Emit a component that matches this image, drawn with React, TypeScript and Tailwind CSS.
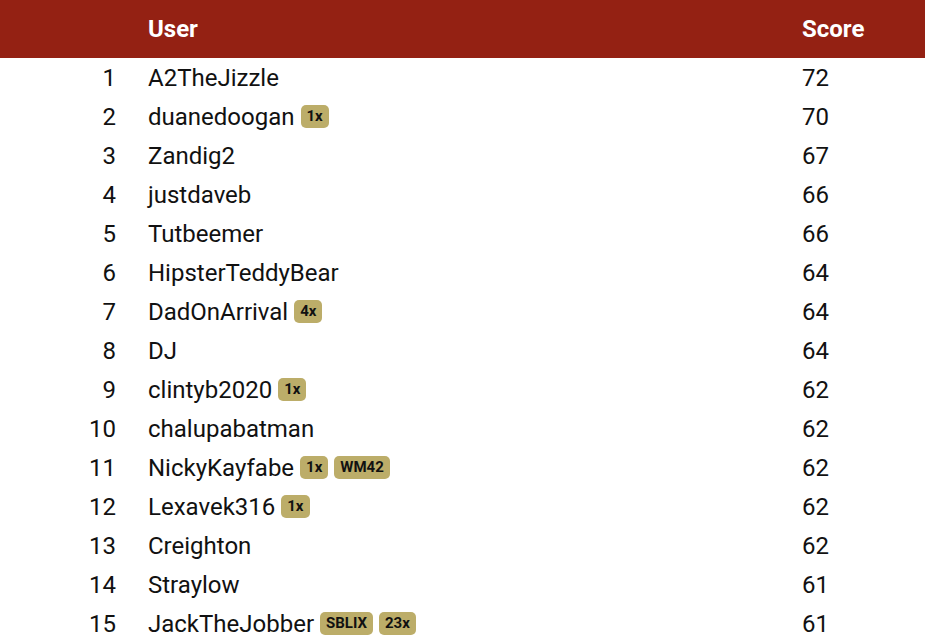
const rows: { rank: number; user: string; badges: string[]; score: number }[] = [
  { rank: 1, user: 'A2TheJizzle', badges: [], score: 72 },
  { rank: 2, user: 'duanedoogan', badges: ['1x'], score: 70 },
  { rank: 3, user: 'Zandig2', badges: [], score: 67 },
  { rank: 4, user: 'justdaveb', badges: [], score: 66 },
  { rank: 5, user: 'Tutbeemer', badges: [], score: 66 },
  { rank: 6, user: 'HipsterTeddyBear', badges: [], score: 64 },
  { rank: 7, user: 'DadOnArrival', badges: ['4x'], score: 64 },
  { rank: 8, user: 'DJ', badges: [], score: 64 },
  { rank: 9, user: 'clintyb2020', badges: ['1x'], score: 62 },
  { rank: 10, user: 'chalupabatman', badges: [], score: 62 },
  { rank: 11, user: 'NickyKayfabe', badges: ['1x', 'WM42'], score: 62 },
  { rank: 12, user: 'Lexavek316', badges: ['1x'], score: 62 },
  { rank: 13, user: 'Creighton', badges: [], score: 62 },
  { rank: 14, user: 'Straylow', badges: [], score: 61 },
  { rank: 15, user: 'JackTheJobber', badges: ['SBLIX', '23x'], score: 61 },
];

function Badge({ label }: { label: string }) {
  return (
    <span className="ml-[6px] inline-flex h-[23px] items-center rounded-[5px] bg-[#bcad69] px-[6px] text-[15px] font-bold leading-none text-[#111]">
      {label}
    </span>
  );
}

export default function App() {
  return (
    <div className="min-h-screen bg-white font-['Roboto',sans-serif] text-[#111]">
      <div className="flex h-[58px] items-center bg-[#942113] text-[24px] font-bold text-white">
        <div className="w-[148px]" />
        <div className="flex-1">User</div>
        <div className="w-[123px]">Score</div>
      </div>
      {rows.map((r) => (
        <div key={r.rank} className="flex h-[39px] items-center text-[24px]">
          <div className="w-[148px] pr-[32px] text-right">{r.rank}</div>
          <div className="flex flex-1 items-center">
            <span>{r.user}</span>
            {r.badges.map((b) => (
              <Badge key={b} label={b} />
            ))}
          </div>
          <div className="w-[123px]">{r.score}</div>
        </div>
      ))}
    </div>
  );
}
